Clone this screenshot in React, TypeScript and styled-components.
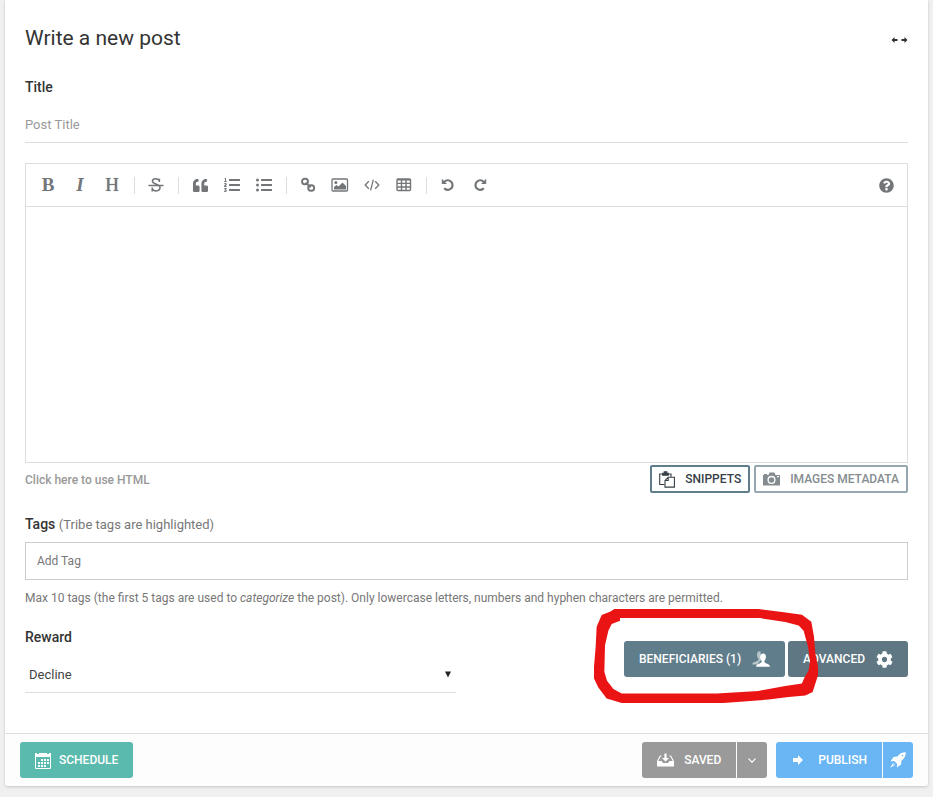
import React from "react";
import styled, { createGlobalStyle, css } from "styled-components";
import {
  FaQuoteLeft,
  FaListOl,
  FaListUl,
  FaQuestionCircle,
  FaCog,
} from "react-icons/fa";

const GlobalStyle = createGlobalStyle`
  * { box-sizing: border-box; }
  body {
    margin: 0;
    background: #f0f0f0;
    font-family: Roboto, "Liberation Sans", sans-serif;
    font-size: 13px;
    color: #333;
  }
  button, input, select, textarea { font: inherit; }
  svg { display: block; flex: none; }
`;

const Card = styled.main`
  margin: 0 5px 11px;
  background: #fff;
  border-radius: 0 0 3px 3px;
  box-shadow: 0 1px 3px rgba(0, 0, 0, 0.18);
`;

const Form = styled.form`
  padding: 24px 20px 0;
`;

const Header = styled.header`
  display: flex;
  justify-content: space-between;
  align-items: center;
  height: 28px;
`;

const Heading = styled.h1`
  margin: 0;
  font-size: 21px;
  line-height: 28px;
  font-weight: 400;
`;

const IconButton = styled.button`
  display: flex;
  align-items: center;
  justify-content: center;
  padding: 0;
  border: 0;
  background: none;
  color: #2e3133;
  margin-top: 4px;
`;

const Label = styled.label`
  display: block;
  font-size: 14px;
  line-height: 20px;
  font-weight: 500;
`;

const TitleField = styled.div`
  margin-top: 25px;
`;

const TitleInput = styled.input`
  display: block;
  width: 100%;
  height: 36px;
  margin-top: 10px;
  padding: 0;
  border: 0;
  border-bottom: 1px solid #ddd;
  background: none;
  &::placeholder { color: #999; opacity: 1; }
`;

const Editor = styled.section`
  margin-top: 20px;
  border: 1px solid #ddd;
`;

const Toolbar = styled.div`
  display: flex;
  align-items: center;
  height: 43px;
  padding: 0 5px 0 6px;
  border-bottom: 1px solid #ddd;
`;

const Tool = styled.button<{ $italic?: boolean; $light?: boolean; $end?: boolean }>`
  display: flex;
  align-items: center;
  justify-content: center;
  width: 32px;
  height: 32px;
  padding: 0;
  border: 0;
  background: none;
  color: #737679;
  font-family: "Liberation Serif", serif;
  font-size: 19px;
  line-height: 32px;
  font-weight: ${(p) => (p.$light ? 400 : 700)};
  text-shadow: ${(p) => (p.$light ? "0 0 1px currentColor" : "none")};
  font-style: ${(p) => (p.$italic ? "italic" : "normal")};
  margin-left: ${(p) => (p.$end ? "auto" : "0")};
`;

const Divider = styled.span`
  width: 1px;
  height: 17px;
  margin: 0 5px 0 6px;
  background: #ddd;
`;

const TextArea = styled.textarea`
  display: block;
  width: 100%;
  height: 255px;
  padding: 10px;
  border: 0;
  resize: none;
  background: #fff;
`;

const BelowEditor = styled.div`
  display: flex;
  justify-content: space-between;
  align-items: flex-start;
  padding-top: 2px;
`;

const HtmlLink = styled.a`
  margin-top: 5px;
  font-size: 12px;
  line-height: 20px;
  font-weight: 500;
  color: #999;
  text-decoration: none;
`;

const Group = styled.div<{ $gap: number }>`
  position: relative;
  display: flex;
  gap: ${(p) => p.$gap}px;
`;

const OutlineButton = styled.button<{ $muted?: boolean }>`
  display: flex;
  align-items: center;
  gap: 10px;
  height: 28px;
  padding: 0 7px;
  border: 2px solid ${(p) => (p.$muted ? "#97a7af" : "#607d8b")};
  border-radius: 2px;
  background: #fff;
  color: ${(p) => (p.$muted ? "#858c8f" : "#374047")};
  font-size: 12px;
  font-weight: 500;
`;

const TagsLabel = styled(Label)`
  margin-top: 21px;
  small {
    font-size: 13px;
    font-weight: 400;
    color: #777;
  }
`;

const TagInput = styled.input`
  display: block;
  width: 100%;
  height: 38px;
  margin-top: 7px;
  padding: 0 11px;
  border: 1px solid #ccc;
  background: #fff;
  font-size: 12px;
  &::placeholder { color: #777; opacity: 1; }
`;

const Hint = styled.p`
  margin: 8px 0 0;
  font-size: 12px;
  line-height: 20px;
  color: #777;
`;

const RewardRow = styled.div`
  display: flex;
  justify-content: space-between;
  align-items: flex-start;
  margin-top: 19px;
`;

const RewardField = styled.div`
  flex: 0 1 431px;
`;

const SelectBox = styled.div`
  display: flex;
  align-items: center;
  height: 36px;
  margin-top: 10px;
  border-bottom: 1px solid #ddd;
`;

const Select = styled.select`
  flex: 1;
  height: 35px;
  margin-right: -14px;
  padding: 0 4px;
  border: 0;
  appearance: none;
  background: none;
  color: #444;
`;

const Caret = styled.svg`
  margin-right: 5px;
  pointer-events: none;
`;

const tones = {
  slate: "#607d8b",
  deep: "#5e7783",
  teal: "#5abaae",
  grey: "#9a9a9a",
  blue: "#6ab6f5",
};

const SolidButton = styled.button<{
  $tone: keyof typeof tones;
  $gap?: number;
  $pad?: number;
  $join?: "left" | "right";
}>`
  display: flex;
  align-items: center;
  justify-content: center;
  gap: ${(p) => p.$gap ?? 10}px;
  height: 36px;
  padding: 0 ${(p) => p.$pad ?? 15}px;
  border: 0;
  border-radius: 3px;
  background: ${(p) => tones[p.$tone]};
  color: #fff;
  font-size: 12px;
  font-weight: 500;
  ${(p) => p.$join === "left" && css`border-radius: 3px 0 0 3px;`}
  ${(p) => p.$join === "right" && css`border-radius: 0 3px 3px 0; width: 30px;`}
`;

const Actions = styled(Group)`
  margin-top: 14px;
`;

const Marker = styled.svg`
  position: absolute;
  left: -30px;
  top: -32px;
  pointer-events: none;
`;

const Footer = styled.footer`
  display: flex;
  justify-content: space-between;
  margin-top: 40px;
  padding: 8px 15px;
  border-top: 1px solid #ddd;
  border-radius: 0 0 3px 3px;
  background: #fdfdfd;
`;

const StrikeIcon = () => (
  <svg width="16" height="16" viewBox="0 0 16 16" fill="none" stroke="currentColor" strokeWidth="1.5">
    <path d="M11.4 5V1.7M11.4 4C10.6 1 4.6.8 4.4 4c0 2 2 2.6 4 3.2 2.4.8 4 1.6 3.6 4-.6 3.6-6.6 3.6-7.8.2M4.2 10.4v4" />
    <path d="M.5 8.500h15" />
  </svg>
);

const LinkIcon = () => (
  <svg width="16" height="16" viewBox="0 0 16 16" fill="none" stroke="currentColor" strokeWidth="1.9">
    <rect x="2" y="1.700" width="6" height="5.600" rx="2.700" />
    <rect x="8.200" y="8.200" width="6" height="5.600" rx="2.700" />
    <path d="M5.600 5.600l5 4.600" />
  </svg>
);

const ImageIcon = () => (
  <svg width="18" height="16" viewBox="0 0 18 16">
    <rect x="1" y="2" width="15.5" height="12" rx="1" fill="none" stroke="currentColor" strokeWidth="1.3" />
    <circle cx="4.9" cy="5.5" r="1.5" fill="currentColor" />
    <path d="M3 12.5V10l2.5-2 2 1.5L11.5 5.5 15 9v3.5z" fill="currentColor" />
  </svg>
);

const CodeIcon = () => (
  <svg width="16" height="14" viewBox="0 0 16 14" fill="none" stroke="currentColor" strokeWidth="1.3">
    <path d="M4.8 3.2L1.2 7l3.6 3.8M11.2 3.2L14.8 7l-3.6 3.8M9.4 1.7L6.6 12.3" />
  </svg>
);

const TableIcon = () => (
  <svg width="16" height="14" viewBox="0 0 16 14" fill="none" stroke="currentColor" strokeWidth="1.4">
    <rect x="1" y="1" width="13.5" height="11.5" rx="1" />
    <path d="M1 1.8h13.5M1 5.4h13.5M1 9h13.5M5.5 1v11.5M10 1v11.5" />
  </svg>
);

const TurnIcon = ({ forward }: { forward?: boolean }) => (
  <svg width="14" height="14" viewBox="0 0 14 14">
    <g transform={forward ? "matrix(-1 0 0 1 14 0)" : undefined}>
      <path d="M.8.800v5.200h5.200z" fill="currentColor" />
      <path d="M3.300 3.700A4.800 4.800 0 1 1 3.200 10.300" fill="none" stroke="currentColor" strokeWidth="2.200" />
    </g>
  </svg>
);

const ExpandIcon = () => (
  <svg width="17" height="8" viewBox="0 0 17 8" fill="currentColor">
    <path d="M.5 4l3-3v2H6.500v2H3.500v2zM16.500 4l-3-3v2H10.500v2h3v2z" />
  </svg>
);

const ClipboardIcon = () => (
  <svg width="16" height="17" viewBox="0 0 16 17" fill="none" stroke="currentColor" strokeWidth="1.1">
    <path d="M5.500 13.500H.7V3h3M9.300 3h2.700v3" />
    <path d="M3.700 2.200h1.500V.8h2.600v1.400h1.500v2H3.700z" fill="currentColor" />
    <path d="M9.200 6.200h6.200v9.900H6V9.500zM9.200 6.200v3.300H6" />
  </svg>
);

const CameraIcon = () => (
  <svg width="17" height="14" viewBox="0 0 17 14" fill="currentColor">
    <path d="M0 3h1V2h3v1h1.500l1-2.500h5l1 2.500H17v10.500H0z" />
    <circle cx="8.500" cy="7.900" r="3.400" fill="none" stroke="#fff" strokeWidth="1.3" />
    <rect x="14" y="4" width="2" height="1.200" fill="#fff" />
  </svg>
);

const PeopleIcon = () => (
  <svg width="18" height="16" viewBox="0 0 18 16" fill="#fff">
    <path opacity=".55" d="M8.5.2C5.7-.2 4.8 1.500 5 4c.1 2 .8 3 1.500 4 .2 1.600-1 1.800-3.500 2.800C1 11.600.2 12.200.2 13.500h5L9 9z" />
    <path d="M11.300 2.500c-2.400 0-3.300 1.600-3.100 4 .1 1.600.7 2.700 1.500 3.500.1 1.400-.6 1.800-2.900 2.700C5 13.400 4.100 14.200 4 15.800h14c-.1-1.600-1-2.400-2.800-3.100-2.300-.9-3-1.300-2.900-2.700.8-.8 1.500-1.900 1.600-3.500.2-2.400-.5-4-2.600-4z" />
  </svg>
);

const CalendarIcon = () => (
  <svg width="16" height="17" viewBox="0 0 16 17" fill="#fff">
    <path d="M.5 2.500h15v14H.5z" fill="none" stroke="#fff" />
    <path d="M0 1h2v1h2V1h8v1h2V1h2v4H0z" />
    <path d="M6 7h2v2H6zM9 7h2v2H9zM12 7h2v2h-2zM3 10h2v2H3zM6 10h2v2H6zM9 10h2v2H9zM12 10h2v2h-2zM3 13h2v2H3zM6 13h2v2H6zM9 13h2v2H9z" />
  </svg>
);

const InboxIcon = () => (
  <svg width="17" height="14" viewBox="0 0 17 14" fill="#fff">
    <path d="M0 8h4.500l1.500 2h5l1.500-2H17v5.500H0z" />
    <path d="M4.500 3H3.300L.6 8M12.500 3h1.200l2.700 5" fill="none" stroke="#fff" strokeWidth="1.200" />
    <path d="M7.400.5h2.200V5H12L8.500 8.600 5 5h2.400z" />
  </svg>
);

const ChevronIcon = () => (
  <svg width="8" height="5" viewBox="0 0 8 5" fill="none" stroke="#fff" strokeWidth="1.200">
    <path d="M.5.7L4 4.200 7.500.7" />
  </svg>
);

const ArrowIcon = () => (
  <svg width="13" height="10" viewBox="0 0 13 10" fill="#fff">
    <path d="M2 3h5V0l5 5-5 5V7H2z" />
  </svg>
);

const RocketIcon = () => (
  <svg width="16" height="16" viewBox="0 0 16 16" fill="#fff">
    <path d="M15.800.2C12 .2 9.600 1.500 7.300 4.600L3.500 5 .6 9.200l3.500-.3L7.200 12l-.3 3.500 4.200-3 .3-3.700C14.500 6.500 15.800 4 15.800.2z" />
    <path d="M3.300 10.500L.2 15.800l5.300-3.100-1-.2-2 1.200 1.200-2z" />
    <circle cx="12.500" cy="3.500" r=".8" fill="#6ab6f5" />
  </svg>
);

export default function App() {
  return (
    <>
      <GlobalStyle />
      <Card>
        <Form onSubmit={(e) => e.preventDefault()}>
          <Header>
            <Heading>Write a new post</Heading>
            <IconButton type="button" aria-label="Expand width"><ExpandIcon /></IconButton>
          </Header>

          <TitleField>
            <Label htmlFor="title">Title</Label>
            <TitleInput id="title" placeholder="Post Title" />
          </TitleField>

          <Editor aria-label="Post editor">
            <Toolbar role="toolbar">
              <Tool type="button" aria-label="Bold">B</Tool>
              <Tool type="button" aria-label="Italic" $italic>I</Tool>
              <Tool type="button" aria-label="Heading" $light>H</Tool>
              <Divider />
              <Tool type="button" aria-label="Strikethrough"><StrikeIcon /></Tool>
              <Divider />
              <Tool type="button" aria-label="Quote"><FaQuoteLeft size={15} /></Tool>
              <Tool type="button" aria-label="Numbered list"><FaListOl size={16} /></Tool>
              <Tool type="button" aria-label="Bulleted list"><FaListUl size={16} /></Tool>
              <Divider />
              <Tool type="button" aria-label="Link"><LinkIcon /></Tool>
              <Tool type="button" aria-label="Image"><ImageIcon /></Tool>
              <Tool type="button" aria-label="Code"><CodeIcon /></Tool>
              <Tool type="button" aria-label="Table"><TableIcon /></Tool>
              <Divider />
              <Tool type="button" aria-label="Undo"><TurnIcon /></Tool>
              <Tool type="button" aria-label="Redo"><TurnIcon forward /></Tool>
              <Tool type="button" aria-label="Help" $end><FaQuestionCircle size={15} /></Tool>
            </Toolbar>
            <TextArea aria-label="Post body" />
          </Editor>

          <BelowEditor>
            <HtmlLink href="#html">Click here to use HTML</HtmlLink>
            <Group $gap={4}>
              <OutlineButton type="button"><ClipboardIcon />SNIPPETS</OutlineButton>
              <OutlineButton type="button" $muted><CameraIcon />IMAGES METADATA</OutlineButton>
            </Group>
          </BelowEditor>

          <TagsLabel htmlFor="tags">Tags <small>(Tribe tags are highlighted)</small></TagsLabel>
          <TagInput id="tags" placeholder="Add Tag" />
          <Hint>
            Max 10 tags (the first 5 tags are used to <em>categorize</em> the post). Only lowercase
            letters, numbers and hyphen characters are permitted.
          </Hint>

          <RewardRow>
            <RewardField>
              <Label htmlFor="reward">Reward</Label>
              <SelectBox>
                <Select id="reward" defaultValue="Decline">
                  <option>Decline</option>
                </Select>
                <Caret width="6" height="7" viewBox="0 0 6 7"><path d="M0 .5h6L3 6.500z" fill="#222" /></Caret>
              </SelectBox>
            </RewardField>
            <Actions $gap={3}>
              <SolidButton type="button" $tone="slate" $gap={11}>BENEFICIARIES (1)<PeopleIcon /></SolidButton>
              <SolidButton type="button" $tone="deep" $gap={11}>ADVANCED<FaCog size={17} /></SolidButton>
              <Marker width="224" height="94" viewBox="27 27 671 281" aria-hidden="true">
                <path
                  fill="#eb1414"
                  fillRule="evenodd"
                  d="M88 27H520L590 36 650 44 678 65 686 110 690 160 698 200V225L682 275 660 286 610 290 550 298 415 308H110L65 295 40 262 27 235V200L32 140 35 80 50 45 75 35ZM105 54V62L80 72 70 92 60 135 58 215 66 242 85 266 110 280H395L520 272 600 257 650 250 656 235 670 210 674 180 668 140 655 92 640 76 600 66 525 54Z"
                />
              </Marker>
            </Actions>
          </RewardRow>
        </Form>

        <Footer>
          <SolidButton type="button" $tone="teal" $gap={8}><CalendarIcon />SCHEDULE</SolidButton>
          <Group $gap={9}>
            <Group $gap={1}>
              <SolidButton type="button" $tone="grey" $join="left"><InboxIcon />SAVED</SolidButton>
              <SolidButton type="button" $tone="grey" $join="right" $pad={0} aria-label="Save options"><ChevronIcon /></SolidButton>
            </Group>
            <Group $gap={1}>
              <SolidButton type="button" $tone="blue" $join="left" $gap={14}><ArrowIcon />PUBLISH</SolidButton>
              <SolidButton type="button" $tone="blue" $join="right" $pad={0} aria-label="Quick publish"><RocketIcon /></SolidButton>
            </Group>
          </Group>
        </Footer>
      </Card>
    </>
  );
}
